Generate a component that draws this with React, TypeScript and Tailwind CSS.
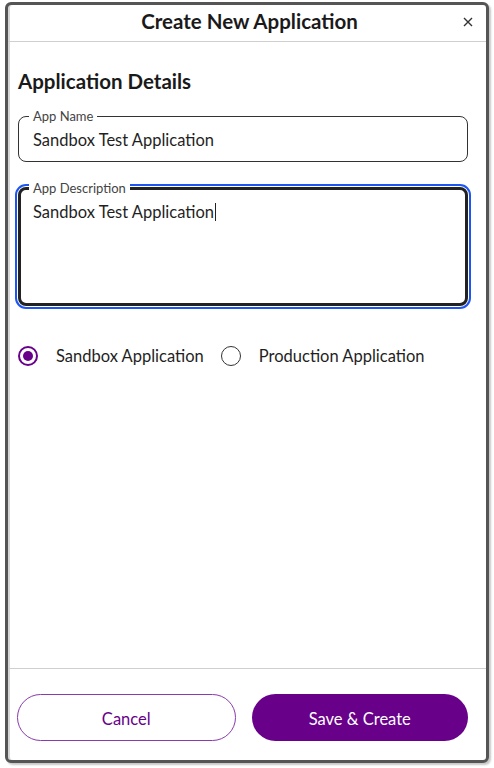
import { useState } from 'react'

const PURPLE = '#68008a'

function Radio({ checked, label, onClick }: { checked: boolean; label: string; onClick: () => void }) {
  return (
    <button type="button" onClick={onClick} className="flex items-center gap-[18px]">
      <span
        className={
          checked
            ? 'flex h-[20px] w-[20px] items-center justify-center rounded-full border-2 border-[#68008a]'
            : 'flex h-[20px] w-[20px] items-center justify-center rounded-full border-[1.5px] border-[#333]'
        }
      >
        {checked && <span className="h-[10px] w-[10px] rounded-full bg-[#68008a]" />}
      </span>
      <span className="text-[16.5px] text-[#1f1f1f]">{label}</span>
    </button>
  )
}

export default function App() {
  const [appType, setAppType] = useState<'sandbox' | 'production'>('sandbox')
  const name = 'Sandbox Test Application'
  const description = 'Sandbox Test Application'

  return (
    <div className="h-[768px] w-[494px] bg-white pl-[5px] pt-[2px]" style={{ fontFamily: 'Lato, "Open Sans", sans-serif' }}>
      <div className="flex h-[761px] w-[484px] flex-col rounded-[6px] border-[3px] border-[#555] bg-white shadow-[inset_2px_0_0_#d6d6d6,2px_2px_2px_#c8c8c8]">
        {/* header */}
        <div className="flex h-[37px] items-center border-b border-[#cfcfcf] pb-[3px] pl-[10px] pr-[13px]">
          <h2 className="flex-1 pl-[18px] text-center text-[20.5px] font-bold text-[#1a1a1a]">Create New Application</h2>
          <button type="button" className="text-[#333]" aria-label="Close">
            <svg width="10" height="10" viewBox="0 0 10 10" stroke="currentColor" strokeWidth="1.4">
              <path d="M1 1l8 8M9 1l-8 8" />
            </svg>
          </button>
        </div>

        {/* body */}
        <div className="flex flex-1 flex-col pl-[10px] pr-[18px] pt-[25px]">
          <h3 className="h-[28px] text-[20.5px] font-bold leading-[28px] text-[#1a1a1a]">Application Details</h3>

          <div className="relative mt-[21px] h-[46px] rounded-[8px] border-[1.5px] border-[#333] pl-[14px] pt-[12px]">
            <span className="absolute -top-[9px] left-[10px] bg-white px-[4px] text-[13px] leading-[16px] text-[#444]">App Name</span>
            <div className="text-[16.5px] leading-[22px] text-[#1f1f1f]">{name}</div>
          </div>

          <div className="relative mt-[25px] h-[119px] rounded-[8px] border-[3px] border-[#222] pl-[12px] pt-[11px] outline-2 outline-offset-1 outline-[#1c55f2]">
            <span className="absolute -top-[10px] left-[8px] bg-white px-[4px] text-[13px] leading-[16px] text-[#444]">
              App Description
            </span>
            <div className="flex items-center text-[16.5px] leading-[22px] text-[#1f1f1f]">
              {description}
              <span className="ml-[1px] inline-block h-[18px] w-[1px] bg-[#222]" />
            </div>
          </div>

          <div className="mt-[38px] flex items-center gap-[17px]">
            <Radio checked={appType === 'sandbox'} label="Sandbox Application" onClick={() => setAppType('sandbox')} />
            <Radio
              checked={appType === 'production'}
              label="Production Application"
              onClick={() => setAppType('production')}
            />
          </div>
        </div>

        {/* footer */}
        <div className="flex gap-[16px] border-t border-[#cfcfcf] pb-[19px] pl-[9px] pr-[18px] pt-[25px]">
          <button
            type="button"
            className="h-[47px] flex-1 rounded-full border border-[#8a3aad] pt-[3px] text-[16.5px] text-[#68008a]"
          >
            Cancel
          </button>
          <button
            type="button"
            className="h-[47px] flex-1 rounded-full pt-[3px] text-[16.5px] text-white"
            style={{ backgroundColor: PURPLE }}
          >
            Save &amp; Create
          </button>
        </div>
      </div>
    </div>
  )
}
